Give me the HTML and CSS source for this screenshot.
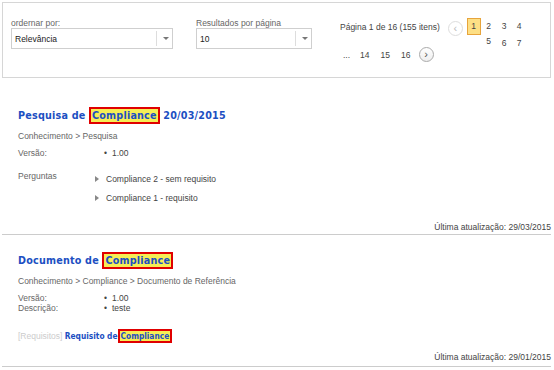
FILE: index.html
```html
<!DOCTYPE html>
<html lang="pt">
<head>
    <meta charset="UTF-8">
    <title>Pesquisa</title>
    <link rel="stylesheet" href="styles.css">
</head>
<body>

    <div class="filters">
        <div class="field field-order">
            <label>ordernar por:</label>
            <div class="select"><span>Relevância</span><i class="arrow"></i></div>
        </div>
        <div class="field field-size">
            <label>Resultados por página</label>
            <div class="select"><span>10</span><i class="arrow"></i></div>
        </div>
        <div class="pager">
            <div class="pager-top">
                <span class="pager-info">Página 1 de 16 (155 itens)</span>
                <span class="pager-btn prev">&#8249;</span>
                <div class="pages">
                    <span class="current">1</span>
                    <span>2</span>
                    <span>3</span>
                    <span>4</span>
                    <span class="wrap">5</span>
                    <span>6</span>
                    <span>7</span>
                </div>
            </div>
            <div class="pager-bottom">
                <span class="dots">...</span>
                <span>14</span>
                <span>15</span>
                <span class="last">16</span>
                <span class="pager-btn next">&#8250;</span>
            </div>
        </div>
    </div>

    <div class="result">
        <h2 class="result-title">Pesquisa de <mark>Compliance</mark> 20/03/2015</h2>
        <div class="crumbs">Conhecimento &gt; Pesquisa</div>
        <div class="props">
            <span class="prop-name">Versão:</span>
            <ul class="prop-values"><li>1.00</li></ul>
        </div>
        <div class="props questions">
            <span class="prop-name">Perguntas</span>
            <ul class="question-list">
                <li>Compliance 2 - sem requisito</li>
                <li>Compliance 1 - requisito</li>
            </ul>
        </div>
        <div class="updated">Última atualização: 29/03/2015</div>
    </div>

    <div class="result second">
        <h2 class="result-title">Documento de <mark>Compliance</mark></h2>
        <div class="crumbs">Conhecimento &gt; Compliance &gt; Documento de Referência</div>
        <div class="props tight">
            <span class="prop-name">Versão:</span>
            <ul class="prop-values"><li>1.00</li></ul>
        </div>
        <div class="props tight">
            <span class="prop-name">Descrição:</span>
            <ul class="prop-values"><li>teste</li></ul>
        </div>
        <div class="links">
            <span class="links-label">[Requisitos]</span>
            <a href="#">Requisito de<mark>Compliance</mark></a>
        </div>
        <div class="updated">Última atualização: 29/01/2015</div>
    </div>

</body>
</html>
```

FILE: styles.css
```css
* {
    box-sizing: border-box;
    margin: 0;
    padding: 0;
}
body {
    background-color: #fff;
    font-family: 'Liberation Sans', Arial, sans-serif;
    font-size: 8.5px;
    color: #555;
}
.filters {
    margin: 2px 3px 0 2px;
    height: 76px;
    border: 1px solid #d6d6d6;
    display: flex;
    align-items: flex-start;
    padding: 15px 0 0 8px;
}
.field label {
    display: block;
    color: #666;
    line-height: 11px;
    margin-bottom: -1px;
}
.field-order {
    width: 162px;
}
.field-size {
    width: 116px;
    margin-left: 23px;
}
.select {
    height: 21px;
    border: 1px solid #cfcfcf;
    display: flex;
    align-items: center;
    justify-content: space-between;
    color: #222;
    padding-left: 3px;
}
.select .arrow {
    width: 16px;
    height: 15px;
    border-left: 1px solid #ddd;
    position: relative;
}
.select .arrow::after {
    content: '';
    position: absolute;
    left: 6px;
    top: 6px;
    border-left: 3px solid transparent;
    border-right: 3px solid transparent;
    border-top: 3px solid #777;
}
.pager {
    margin-left: 28px;
    color: #444;
}
.pager-top {
    display: flex;
    align-items: flex-start;
}
.pager-info {
    margin-top: 4px;
    line-height: 11px;
}
.pager-btn {
    width: 15px;
    height: 15px;
    border-radius: 50%;
    border: 1px solid #ddd;
    display: flex;
    align-items: center;
    justify-content: center;
    font-size: 11px;
    line-height: 1;
    color: #bbb;
    padding-bottom: 1px;
}
.prev {
    margin: 3px 0 0 8px;
}
.next {
    border-color: #aaa;
    color: #555;
    background: linear-gradient(#fff, #eee);
}
.pages {
    margin-left: 4px;
    display: grid;
    grid-template-columns: 14px 16px 15px 15px;
    grid-template-rows: 17px 12px;
    text-align: center;
    line-height: 16px;
}
.pages span {
    display: block;
}
.pages .wrap {
    grid-column-start: 2;
    line-height: 12px;
}
.pages .current {
    background-color: #fddf85;
    border: 1px solid #e7a43c;
    line-height: 15px;
}
.pager-bottom {
    display: flex;
    align-items: center;
    margin-top: 0;
    padding-left: 3px;
}
.pager-bottom span {
    margin-right: 11px;
}
.pager-bottom .dots {
    margin-right: 10px;
}
.pager-bottom .last {
    margin-right: 8px;
}
.pager-bottom .next {
    margin: 0;
}

.result {
    padding: 28px 0 0 16px;
    border-bottom: 1px solid #ccc;
    margin-right: 3px;
    margin-left: 2px;
}
.second {
    padding-top: 16px;
}
.result-title {
    font-family: 'DejaVu Sans Condensed', 'DejaVu Sans', sans-serif;
    font-size: 10.7px;
    font-weight: bold;
    color: #1c4fc2;
    line-height: 20px;
    letter-spacing: 0.2px;
}
mark {
    background-color: #f6ee55;
    color: #1c4fc2;
    border: 2px solid #e00000;
    padding: 0 1px;
}
.crumbs {
    margin-top: 5px;
    line-height: 11px;
    color: #666;
}
.props {
    display: flex;
    margin-top: 6px;
    line-height: 11px;
}
.prop-name {
    width: 86px;
    color: #666;
}
.prop-values {
    list-style: none;
    color: #444;
}
.prop-values li::before {
    content: '\2022';
    margin-right: 5px;
}
.tight {
    margin-top: 0;
    line-height: 10px;
}
.second .crumbs + .tight {
    margin-top: 6px;
}
.questions {
    margin-top: 12px;
}
.question-list {
    list-style: none;
    margin-top: 3px;
    margin-left: -9px;
    color: #444;
}
.question-list li {
    margin-bottom: 8px;
}
.question-list li::before {
    content: '';
    display: inline-block;
    border-top: 3.5px solid transparent;
    border-bottom: 3.5px solid transparent;
    border-left: 4px solid #888;
    margin-right: 7px;
}
.links {
    margin-top: 16px;
    line-height: 14px;
}
.links-label {
    color: #ccc;
}
.links a {
    color: #1c4fc2;
    font-weight: bold;
    text-decoration: none;
    font-family: 'DejaVu Sans Condensed', 'DejaVu Sans', sans-serif;
    font-size: 8.3px;
}
.updated {
    text-align: right;
    margin-top: 10px;
    line-height: 11px;
    padding-bottom: 1px;
    color: #444;
}
.second .updated {
    margin-top: 9px;
    padding-bottom: 3px;
}
```
